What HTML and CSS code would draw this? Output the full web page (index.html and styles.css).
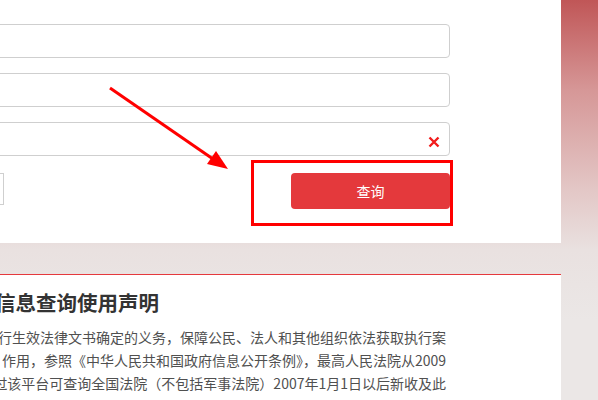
FILE: index.html
```html
<!DOCTYPE html>
<html lang="zh-CN">
<head>
    <meta charset="UTF-8">
    <meta name="viewport" content="width=device-width, initial-scale=1.0">
    <title>被执行人信息查询</title>
    <link rel="stylesheet" href="styles.css">
</head>
<body>
    <div class="page">
        <div class="panel query">
            <div class="form">
                <div class="field"></div>
                <div class="field"></div>
                <div class="field field-clear">
                    <span class="clear">
                        <svg width="12" height="12" viewBox="0 0 12 12"><path d="M1.5 1.5 L10.5 10.5 M10.5 1.5 L1.5 10.5" stroke="#f21c1c" stroke-width="2.4" fill="none"/></svg>
                    </span>
                </div>
                <div class="row">
                    <div class="captcha"></div>
                    <button class="btn">查询</button>
                </div>
            </div>
            <div class="mark"></div>
        </div>

        <div class="panel notice">
            <h2>信息查询使用声明</h2>
            <div class="text">
                <p class="line"><span>行生效法律文书确定的义务，保障公民、法人和其他组织依法获取执行案</span></p>
                <p class="line"><span>作用，参照《中华人民共和国政府信息公开条例》，最高人民法院从2009</span></p>
                <p class="line"><span>过该平台可查询全国法院（不包括军事法院）2007年1月1日以后新收及此</span></p>
            </div>
        </div>
    </div>

    <svg class="arrow" width="598" height="400" viewBox="0 0 598 400">
        <line x1="110" y1="88" x2="213" y2="159" stroke="#ff0000" stroke-width="3"/>
        <polygon points="228,169 207,164 216,151" fill="#ff0000"/>
    </svg>
</body>
</html>
```

FILE: styles.css
```css
html, body {
    margin: 0;
    height: 100%;
}
body {
    font-family: "Noto Sans CJK SC", "Liberation Sans", sans-serif;
    color: #505050;
    background: linear-gradient(to bottom, #c05657 0, #d69797 90px, #e3c7c6 190px, #e9e1e0 250px, #ebe7e6 320px);
    overflow: hidden;
}
.page {
    width: 561px;
}
.panel {
    background-color: #fff;
}
.query {
    position: relative;
    height: 243px;
}
.form {
    margin-left: -50px;
    width: 500px;
    padding-top: 24px;
    display: flex;
    flex-direction: column;
    gap: 15px;
}
.field {
    height: 34px;
    box-sizing: border-box;
    border: 1px solid #cfcfcf;
    border-radius: 4px;
    background-color: #fff;
}
.field-clear {
    display: flex;
    align-items: center;
    justify-content: flex-end;
    padding-right: 9px;
    padding-top: 6px;
}
.clear {
    display: flex;
}
.row {
    display: flex;
    align-items: flex-start;
    margin-top: 2px;
}
.captcha {
    width: 54px;
    height: 32px;
    box-sizing: border-box;
    border: 1px solid #cfcfcf;
}
.btn {
    margin-left: auto;
    width: 159px;
    height: 36px;
    border: none;
    border-radius: 4px;
    background-color: #e4393c;
    color: #fff;
    font-family: inherit;
    font-size: 14px;
    padding: 0;
}
.mark {
    position: absolute;
    left: 251px;
    top: 160px;
    width: 202px;
    height: 66px;
    box-sizing: border-box;
    border: 3px solid #ff0000;
}
.notice {
    margin-top: 31px;
    border-top: 1px solid #e5393d;
    padding-top: 12px;
    height: 113px;
    overflow: hidden;
}
.notice h2 {
    margin: 0 0 0 -5px;
    font-size: 20.5px;
    line-height: 30px;
    font-weight: bold;
    color: #333;
}
.text {
    width: 446px;
    margin-top: 9px;
}
.line {
    display: flex;
    justify-content: flex-end;
    margin: 0;
    font-size: 14px;
    line-height: 23px;
    white-space: nowrap;
}
.arrow {
    position: absolute;
    left: 0;
    top: 0;
    pointer-events: none;
}
```
